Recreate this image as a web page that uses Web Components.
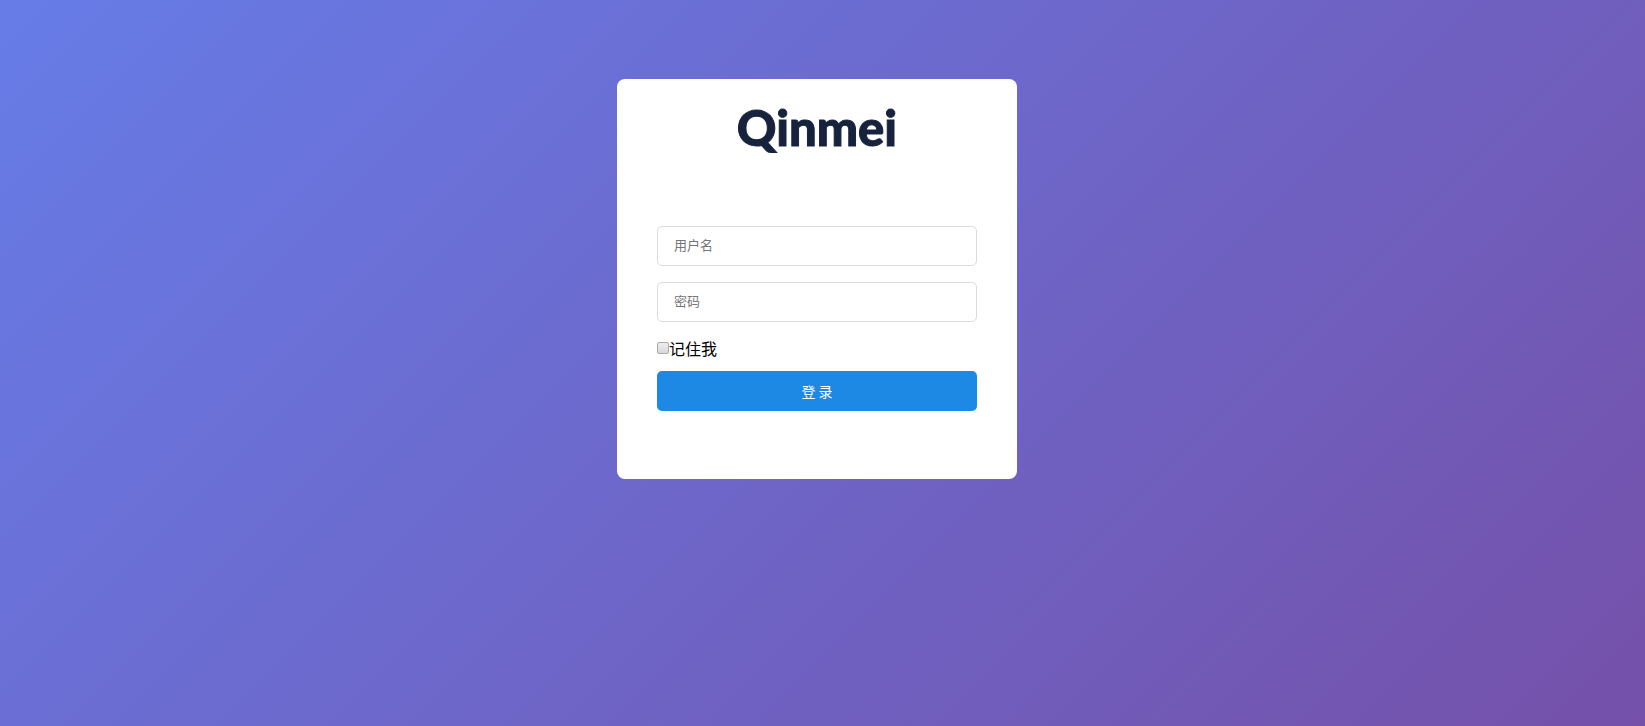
<!DOCTYPE html>
<html lang="zh-CN">
<head>
<meta charset="utf-8">
<meta name="viewport" content="width=device-width, initial-scale=1">
<title>Qinmei</title>
<style>
html { height: 100%; }
body {
  margin: 0;
  min-height: 100%;
  background: linear-gradient(135deg, #667eea -4%, #764ba2 112%);
  font-family: "Noto Sans CJK SC", "Liberation Sans", sans-serif;
}
</style>
</head>
<body>
<login-page></login-page>

<script>
const define = (name, html, setup) => {
  const template = document.createElement('template');
  template.innerHTML = html;
  customElements.define(name, class extends HTMLElement {
    constructor() {
      super();
      const root = this.attachShadow({ mode: 'open' });
      root.append(template.content.cloneNode(true));
    }
    connectedCallback() { if (setup) setup(this, this.shadowRoot); }
  });
};

define('login-field', `
  <style>
    :host { display: block; }
    input {
      display: block; box-sizing: border-box; width: 100%; height: 40px;
      padding: 0 16px 4px; border: 1px solid #dcdcdc; border-radius: 5px;
      background: #fff; color: #000; font: 13px "Noto Sans CJK SC", sans-serif; outline: none;
    }
    input::placeholder { color: #757575; opacity: 1; }
    input:focus { border-color: #1e88e5; }
  </style>
  <input>`, (host, root) => {
  const input = root.querySelector('input');
  input.type = host.getAttribute('type') || 'text';
  input.placeholder = host.getAttribute('label');
  input.setAttribute('aria-label', host.getAttribute('label'));
});

define('login-remember', `
  <style>
    :host { display: flex; }
    label { display: flex; align-items: center; font-size: 16px; line-height: 20px; color: #000; }
    input {
      appearance: none; box-sizing: border-box; width: 12px; height: 12px; margin: 0;
      border: 1px solid #aaa; border-radius: 2px;
      background: linear-gradient(#eee, #d8d8d8);
    }
    input:checked { background: #1e88e5; }
  </style>
  <label for="remember"><input id="remember" type="checkbox"><slot></slot></label>`);

define('login-button', `
  <style>
    :host { display: block; }
    button {
      display: block; width: 100%; height: 40px; padding: 0; border: 0; border-radius: 5px;
      background: #1e88e5; color: #fff; cursor: pointer;
      font: 14px "Noto Sans CJK SC", sans-serif;
    }
  </style>
  <button type="button"><slot></slot></button>`);

define('login-card', `
  <style>
    :host {
      display: block; box-sizing: border-box; width: 400px; max-width: 100%;
      padding: 20px 40px 68px; border-radius: 8px; background: #fff;
    }
    h1 {
      margin: 0 0 71px; text-align: center; color: #17233d;
      font: 900 49px/56px Lato, sans-serif; -webkit-text-stroke: 1px #17233d;
    }
    form { display: flex; flex-direction: column; gap: 16px; }
    .submit { display: flex; flex-direction: column; gap: 13px; }
  </style>
  <h1>Qinmei</h1>
  <form>
    <login-field label="用户名"></login-field>
    <login-field label="密码" type="password"></login-field>
    <div class="submit">
      <login-remember>记住我</login-remember>
      <login-button>登 录</login-button>
    </div>
  </form>`);

define('login-page', `
  <style>
    :host { display: flex; justify-content: center; padding: 79px 27px 79px 16px; }
  </style>
  <login-card></login-card>`);
</script>
</body>
</html>
